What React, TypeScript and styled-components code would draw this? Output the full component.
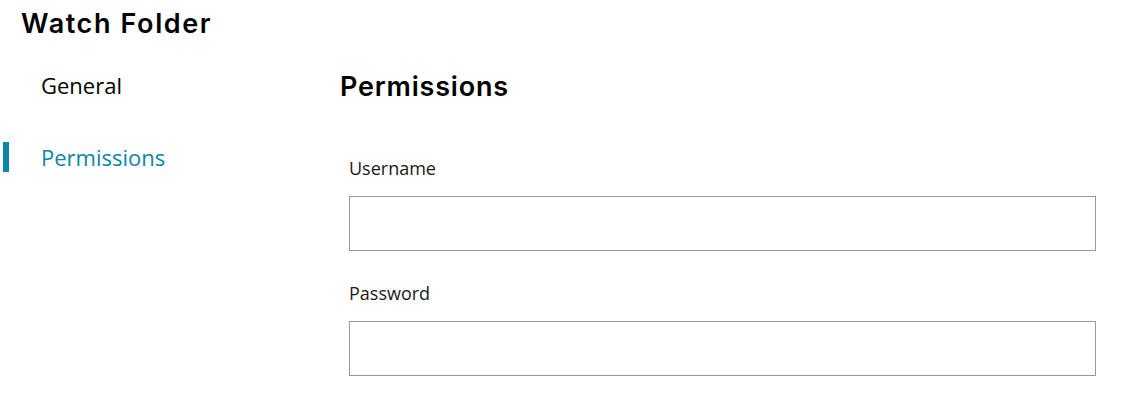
import styled, { createGlobalStyle, css } from "styled-components"

const GlobalStyle = createGlobalStyle`
    body {
        margin: 0;
        background: #ffffff;
        font-family: "Open Sans", "Liberation Sans", sans-serif;
        color: #1a1a1a;
    }
`

const ACCENT = '#0b86a8'

const Page = styled.div`
    display: flex;
    flex-direction: column;
    width: 100%;
    box-sizing: border-box;
`

const Title = styled.h1`
    margin: 0;
    padding: 4px 0 0 21px;
    font-family: "Inter", "Noto Sans", sans-serif;
    font-weight: 600;
    font-size: 27px;
    line-height: 40px;
    letter-spacing: 1.6px;
    color: #000;
`

const Body = styled.div`
    display: flex;
    padding-top: 26px;
`

const SideNav = styled.nav`
    display: flex;
    flex-direction: column;
    width: 340px;
    flex-shrink: 0;
    gap: 42px;
`

type NavItemProps = {
    active?: boolean
}

const NavItem = styled.div<NavItemProps>`
    position: relative;
    padding-left: 41px;
    font-size: 22px;
    line-height: 30px;
    color: #000;
    cursor: pointer;

    ${({ active }) => active && css`
        color: ${ACCENT};
        &::before {
            content: '';
            position: absolute;
            left: 3px;
            top: 0;
            width: 6px;
            height: 30px;
            background: ${ACCENT};
        }
    `}
`

const Content = styled.div`
    flex: 1;
    display: flex;
    flex-direction: column;
    padding-right: 42px;
`

const SectionHeading = styled.h2`
    margin: 0 0 52px 0;
    font-family: "Inter", "Noto Sans", sans-serif;
    font-weight: 600;
    font-size: 27px;
    line-height: 34px;
    letter-spacing: 0.8px;
    color: #000;
`

const Field = styled.div`
    display: flex;
    flex-direction: column;
    padding-left: 9px;
    margin-bottom: 30px;
`

const Label = styled.label`
    font-size: 18px;
    line-height: 24px;
    margin-bottom: 16px;
    color: #1a1a1a;
`

const Input = styled.input`
    height: 55px;
    box-sizing: border-box;
    border: 1px solid #999;
    border-radius: 0;
    padding: 0 12px;
    font-family: inherit;
    font-size: 16px;
    outline: none;
`

export default function App() {
    return (
        <Page>
            <GlobalStyle />
            <Title>Watch Folder</Title>
            <Body>
                <SideNav>
                    <NavItem>General</NavItem>
                    <NavItem active>Permissions</NavItem>
                </SideNav>
                <Content>
                    <SectionHeading>Permissions</SectionHeading>
                    <Field>
                        <Label>Username</Label>
                        <Input type="text" />
                    </Field>
                    <Field>
                        <Label>Password</Label>
                        <Input type="password" />
                    </Field>
                </Content>
            </Body>
        </Page>
    )
}
